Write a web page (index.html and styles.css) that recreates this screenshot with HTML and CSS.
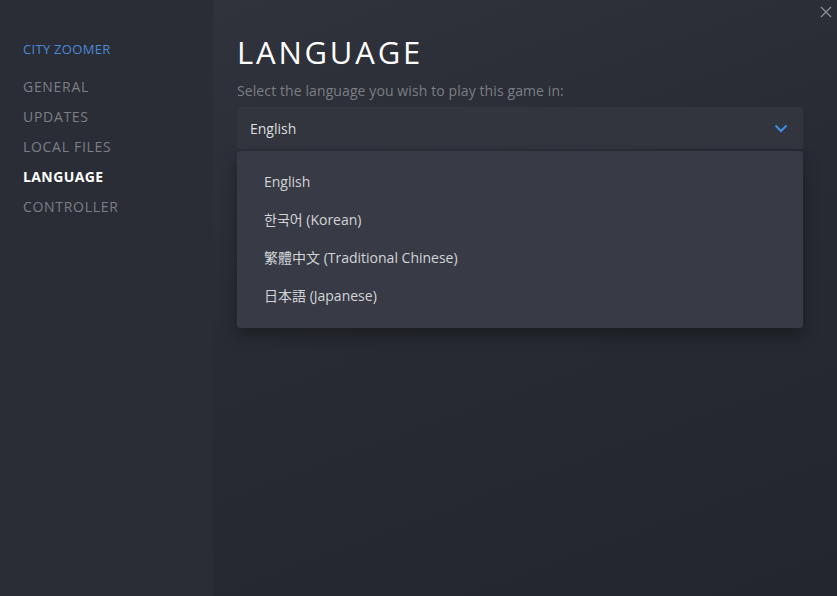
FILE: index.html
```html
<!DOCTYPE html>
<html lang="en">

<head>
    <meta charset="UTF-8">
    <title>City Zoomer - Properties</title>
    <link rel="stylesheet" href="styles.css">
</head>

<body>
    <div class="window">
        <nav class="sidebar">
            <div class="game-title">City Zoomer</div>
            <a class="nav-item" href="#">General</a>
            <a class="nav-item" href="#">Updates</a>
            <a class="nav-item" href="#">Local Files</a>
            <a class="nav-item active" href="#">Language</a>
            <a class="nav-item" href="#">Controller</a>
        </nav>

        <main class="content">
            <button class="close-button" aria-label="Close">
                <svg width="12" height="12" viewBox="0 0 12 12">
                    <path d="M1 1 L11 11 M11 1 L1 11" stroke="#8a9197" stroke-width="1.3" fill="none" />
                </svg>
            </button>
            <h1 class="page-title">Language</h1>
            <p class="page-desc">Select the language you wish to play this game in:</p>

            <div class="dropdown">
                <div class="dropdown-field">
                    <span>English</span>
                    <svg class="chevron" width="14" height="9" viewBox="0 0 14 9">
                        <path d="M1.5 1.5 L7 7 L12.5 1.5" stroke="#3d8fea" stroke-width="2" fill="none" />
                    </svg>
                </div>
                <ul class="dropdown-menu">
                    <li>English</li>
                    <li lang="ko">한국어 (Korean)</li>
                    <li lang="zh-TW">繁體中文 (Traditional Chinese)</li>
                    <li lang="ja">日本語 (Japanese)</li>
                </ul>
            </div>
        </main>
    </div>
</body>

</html>
```

FILE: styles.css
```css
:root {
    --sidebar-bg: #2a2d36;
    --field-bg: #32353e;
    --menu-bg: #383b45;
    --accent: #4b8ad6;
    --text-color: #dcdedf;
    --subtext-color: #7b7e85;
}

* {
    margin: 0;
    padding: 0;
    box-sizing: border-box;
}

body {
    font-family: "Open Sans", "Noto Sans", "Noto Sans CJK TC", sans-serif;
    background-color: #24272f;
    color: var(--text-color);
    overflow: hidden;
}

.window {
    display: flex;
    width: 837px;
    height: 596px;
}

.sidebar {
    width: 213px;
    flex-shrink: 0;
    background-color: var(--sidebar-bg);
    padding: 40px 0 0 23px;
    display: flex;
    flex-direction: column;
}

.game-title {
    text-transform: uppercase;
    color: var(--accent);
    font-size: 13px;
    line-height: 18px;
    letter-spacing: 0.3px;
    margin-bottom: 14px;
}

.nav-item {
    text-transform: uppercase;
    color: var(--subtext-color);
    text-decoration: none;
    font-size: 14px;
    line-height: 30px;
    letter-spacing: 0.7px;
}

.nav-item.active {
    color: #ffffff;
    font-weight: bold;
    letter-spacing: 0.4px;
}

.content {
    flex: 1;
    position: relative;
    padding: 32px 34px 0 24px;
    background: linear-gradient(160deg, #30333c 0%, #282b33 45%, #23262e 100%);
}

.close-button {
    position: absolute;
    top: 6px;
    right: 5px;
    background: none;
    border: none;
    cursor: pointer;
    width: 12px;
    height: 12px;
}

.page-title {
    text-transform: uppercase;
    font-weight: 400;
    font-size: 31px;
    line-height: 40px;
    letter-spacing: 2.8px;
    color: #ffffff;
}

.page-desc {
    font-size: 14px;
    line-height: 20px;
    margin-top: 9px;
    letter-spacing: 0.1px;
    color: var(--subtext-color);
}

.dropdown {
    margin-top: 6px;
    position: relative;
}

.dropdown-field {
    display: flex;
    align-items: center;
    justify-content: space-between;
    height: 42px;
    padding: 0 15px 0 13px;
    background-color: var(--field-bg);
    border-radius: 3px;
    font-size: 14px;
}

.dropdown-menu {
    list-style: none;
    margin-top: 2px;
    padding: 12px 0 13px;
    background-color: var(--menu-bg);
    border-radius: 3px;
    box-shadow: 0 8px 16px rgba(0, 0, 0, 0.3);
}

.dropdown-menu li {
    font-size: 14px;
    line-height: 38px;
    padding-left: 27px;
    color: #d2d4d8;
}

.dropdown-menu li:lang(ko) {
    font-family: "Open Sans", "Noto Sans CJK KR", sans-serif;
}

.dropdown-menu li:lang(ja) {
    font-family: "Open Sans", "Noto Sans CJK JP", sans-serif;
}
```
